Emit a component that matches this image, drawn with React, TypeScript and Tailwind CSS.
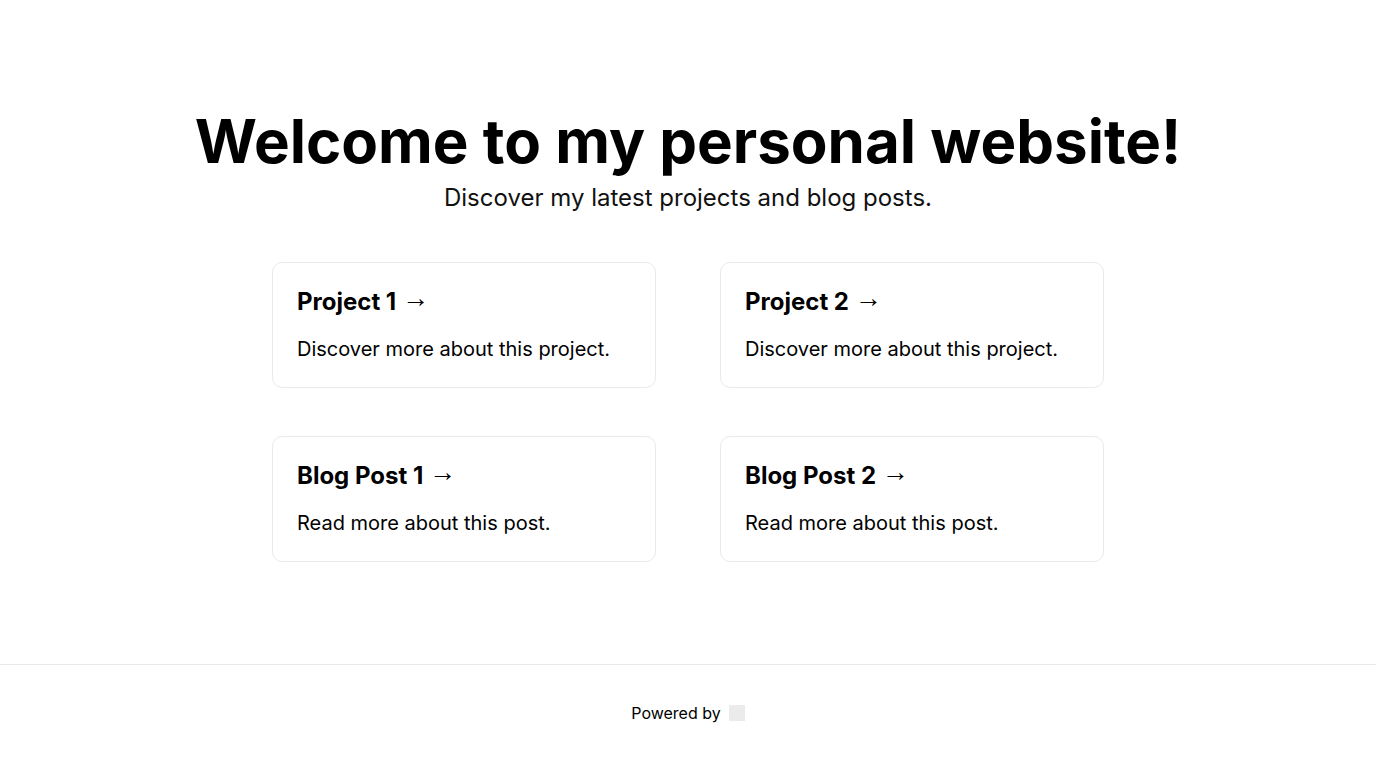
import React from "react";

const cards = [
  { title: "Project 1", text: "Discover more about this project." },
  { title: "Project 2", text: "Discover more about this project." },
  { title: "Blog Post 1", text: "Read more about this post." },
  { title: "Blog Post 2", text: "Read more about this post." },
];

const App = () => {
  return (
    <div className="flex min-h-screen flex-col bg-white text-black font-['Inter',sans-serif]">
      <main className="flex flex-1 flex-col items-center justify-center">
        <h1 className="text-[60px] leading-[78px] font-bold">Welcome to my personal website!</h1>
        <p className="text-[24px] leading-[1.5] text-[#111]">Discover my latest projects and blog posts.</p>
        <div className="mt-[46px] grid grid-cols-2 gap-x-16 gap-y-12">
          {cards.map((c) => (
            <a key={c.title} href="#" className="block w-[384px] rounded-[10px] border border-[#eaeaea] p-6">
              <h2 className="mb-[18px] text-[24px] leading-[30px] font-bold">
                {c.title} <span className="relative -top-[3px] font-['Liberation_Sans',sans-serif] text-[27px] leading-none font-bold">&rarr;</span>
              </h2>
              <p className="text-[20px] leading-[28px]">{c.text}</p>
            </a>
          ))}
        </div>
      </main>
      <footer className="flex h-[104px] items-center justify-center gap-2 border-t border-[#eaeaea] pb-2 text-[16px]">
        <span>Powered by</span>
        <span className="block h-4 w-4 bg-[#ebebeb]" />
      </footer>
    </div>
  );
};

export default App;
